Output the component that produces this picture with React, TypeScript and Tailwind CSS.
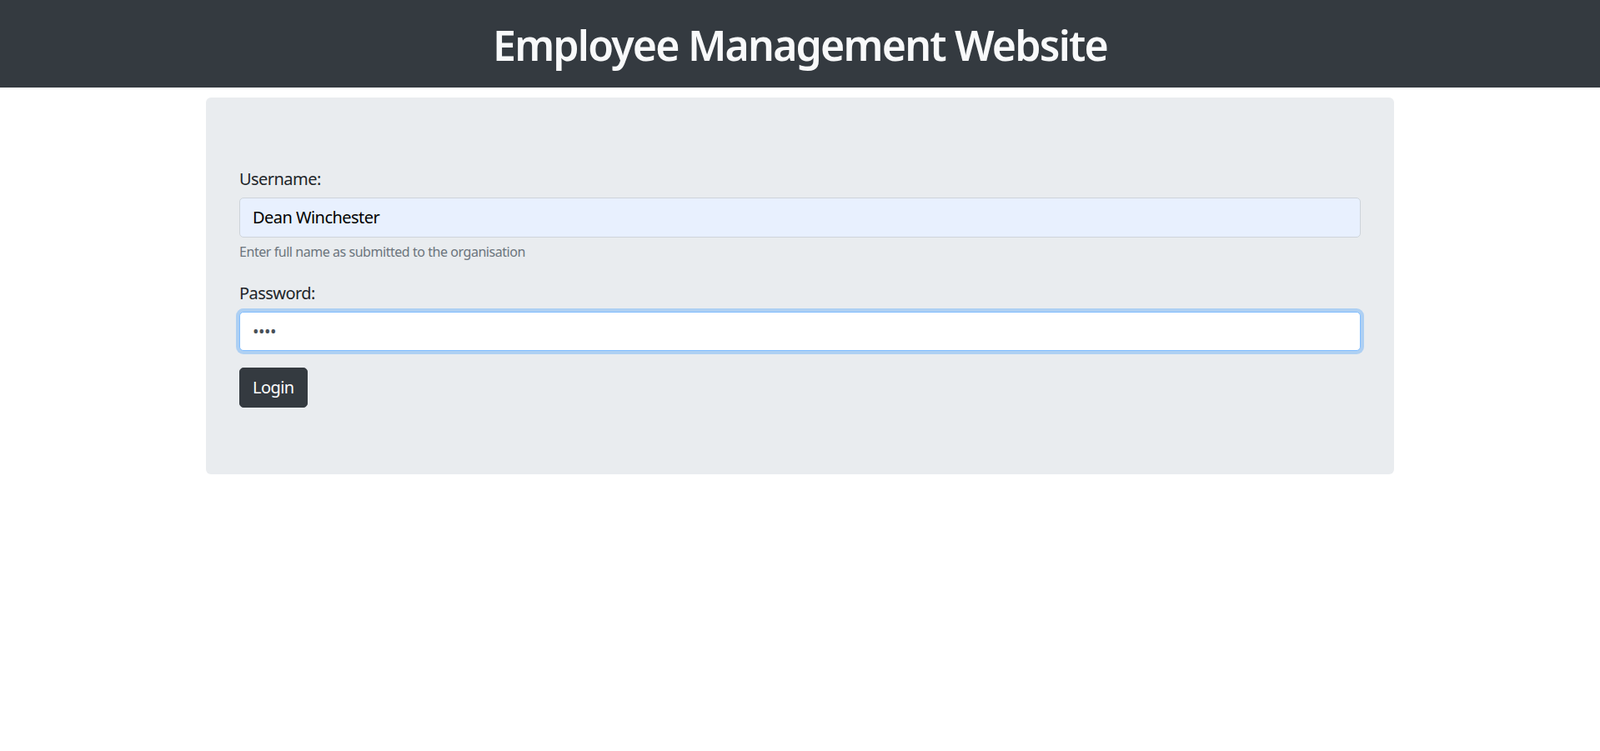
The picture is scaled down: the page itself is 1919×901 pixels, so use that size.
import React from "react";

export default function App() {
  const font = { fontFamily: '"Noto Sans", "Open Sans", sans-serif' };
  return (
    <div className="min-h-[901px] bg-white text-[20px] leading-[1.5] text-[#212529] tracking-[-0.55px]" style={font}>
      <header className="bg-[#343a40] h-[105px] flex items-center justify-center">
        <h1 className="text-[50px] leading-[1.2] font-semibold text-[#f8f9fa] tracking-[-1.8px] pt-[3px]">
          Employee Management Website
        </h1>
      </header>
      <div className="w-[1425px] mx-auto mt-[12px]">
        <div className="bg-[#e9ecef] rounded-[6px] px-[40px] py-[80px]">
          <form>
            <div className="mb-[20px]">
              <label className="block mb-[7px] pt-[3px] leading-[30px]">Username:</label>
              <input
                type="text"
                readOnly
                defaultValue="Dean Winchester"
                className="block w-full h-[47.5px] px-[15px] py-[7.5px] bg-[#e8f0fe] border border-[#ced4da] rounded-[5px] text-[20px] text-black outline-none tracking-[-0.55px]"
                style={font}
              />
              <small className="block mt-[5px] text-[16px] leading-[24px] text-[#6c757d] tracking-[-0.45px]">
                Enter full name as submitted to the organisation
              </small>
            </div>
            <div className="mb-[20px]">
              <label className="block mb-[7px] pt-[3px] leading-[30px]">Password:</label>
              <input
                type="password"
                readOnly
                defaultValue="abcd"
                className="block w-full h-[47.5px] px-[15px] py-[7.5px] bg-white border border-[#80bdff] rounded-[5px] text-[20px] text-[#495057] outline-none shadow-[0_0_0_4px_rgba(0,123,255,0.25)]"
                style={font}
              />
            </div>
            <button
              type="button"
              className="h-[47.5px] px-[15px] bg-[#343a40] border border-[#343a40] rounded-[5px] text-white text-[20px] leading-[30px] tracking-[-0.55px]"
              style={font}
            >
              Login
            </button>
          </form>
        </div>
      </div>
    </div>
  );
}
